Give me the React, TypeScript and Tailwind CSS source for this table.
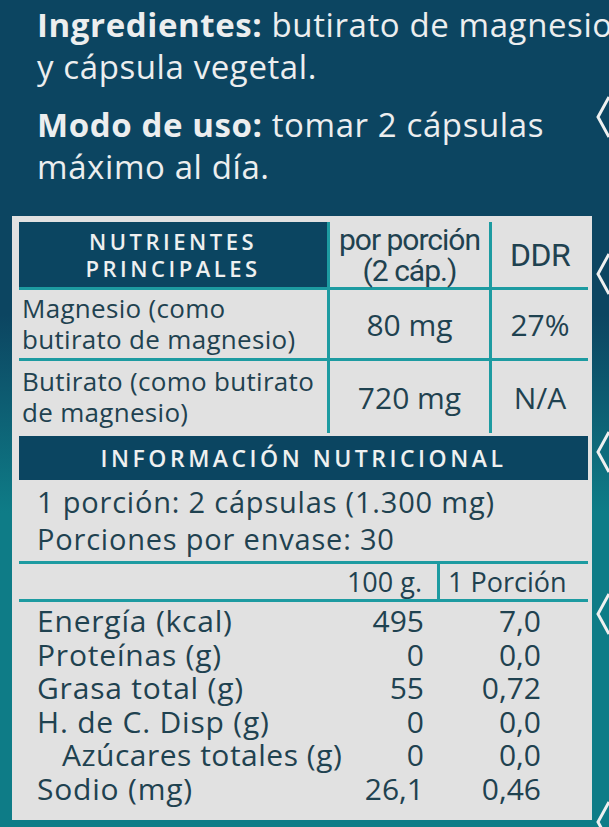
import React from "react";

const Chevron = ({ top }: { top: number }) => (
  <svg
    className="absolute right-0"
    style={{ top }}
    width="14"
    height="44"
    viewBox="0 0 14 44"
  >
    <polyline points="14,2 3,22 14,42" fill="none" stroke="#eef0f0" strokeWidth="3" />
  </svg>
);

const rows: [string, string, string, boolean][] = [
  ["Energía (kcal)", "495", "7,0", false],
  ["Proteínas (g)", "0", "0,0", false],
  ["Grasa total (g)", "55", "0,72", false],
  ["H. de C. Disp (g)", "0", "0,0", false],
  ["Azúcares totales (g)", "0", "0,0", true],
  ["Sodio (mg)", "26,1", "0,46", false],
];

export default function App() {
  return (
    <div className="relative w-[609px] h-[827px] overflow-hidden bg-linear-to-b from-[#0c4561] from-[38%] to-[#0e7c87] to-[62%] font-['Open_Sans',sans-serif]">
      {/* top text */}
      <div className="h-[216px] pl-[37px] pt-[4px] text-[33px] leading-[42px] tracking-[0.6px] text-[#eceeef]">
        <p className="whitespace-nowrap">
          <span className="font-bold">Ingredientes:</span> butirato de magnesio
        </p>
        <p>y cápsula vegetal.</p>
        <p className="mt-[16px] whitespace-nowrap">
          <span className="font-bold">Modo de uso:</span> tomar 2 cápsulas
        </p>
        <p>máximo al día.</p>
      </div>

      {/* panel */}
      <div className="ml-[12px] w-[580px] h-[604px] bg-[#e1e1e1] pl-[7px] pr-[4px] pt-[6px] text-[#1f4250]">
        {/* table 1 */}
        <div className="grid grid-cols-[308px_159px_96px] grid-rows-[65px_68px_72px] gap-[3px] bg-[#1d9ba1]">
          <div className="bg-[#0b4561] flex flex-col items-center justify-center text-[22px] leading-[27px] font-semibold tracking-[3.5px] text-[#eef0f0]">
            <span>NUTRIENTES</span>
            <span>PRINCIPALES</span>
          </div>
          <div className="bg-[#e1e1e1] flex flex-col items-center justify-center text-[30px] leading-[31px] tracking-[-1px] font-['Liberation_Sans_Narrow','Roboto',sans-serif]">
            <span>por porción</span>
            <span>(2 cáp.)</span>
          </div>
          <div className="bg-[#e1e1e1] flex items-center justify-center text-[32px] tracking-[-0.5px] font-['Liberation_Sans_Narrow','Roboto',sans-serif]">
            DDR
          </div>

          <div className="bg-[#e1e1e1] flex flex-col justify-center pl-[3px] text-[26px] leading-[31px] tracking-[0.3px]">
            <span>Magnesio (como</span>
            <span>butirato de magnesio)</span>
          </div>
          <div className="bg-[#e1e1e1] flex items-center justify-center text-[30px]">80 mg</div>
          <div className="bg-[#e1e1e1] flex items-center justify-center text-[30px]">27%</div>

          <div className="bg-[#e1e1e1] flex flex-col justify-center pl-[3px] text-[26px] leading-[31px] tracking-[0.3px]">
            <span>Butirato (como butirato</span>
            <span>de magnesio)</span>
          </div>
          <div className="bg-[#e1e1e1] flex items-center justify-center text-[30px]">720 mg</div>
          <div className="bg-[#e1e1e1] flex items-center justify-center text-[30px]">N/A</div>
        </div>

        {/* info header */}
        <div className="mt-[3px] h-[44px] bg-[#0b4561] flex items-center justify-center text-[23px] font-semibold tracking-[3.5px] text-[#eef0f0]">
          INFORMACIÓN NUTRICIONAL
        </div>

        <div className="pl-[18px] pt-[3px] text-[29px] leading-[37px] tracking-[0.8px]">
          <p className="whitespace-nowrap">1 porción: 2 cápsulas (1.300 mg)</p>
          <p className="whitespace-nowrap">Porciones por envase: 30</p>
        </div>

        <div className="mt-[4px] h-[3px] bg-[#1d9ba1]" />
        <div className="flex h-[35px] text-[27px] leading-[35px]">
          <div className="w-[404px] text-right pr-[1px] whitespace-nowrap">100 g.</div>
          <div className="ml-[14px] w-[3px] bg-[#1d9ba1]" />
          <div className="pl-[8px] whitespace-nowrap">1 Porción</div>
        </div>
        <div className="h-[3px] bg-[#1d9ba1]" />

        <div className="pt-[2px] text-[30px] leading-[33.5px]">
          {rows.map(([l, a, b, indent]) => (
            <div key={l} className="flex whitespace-nowrap">
              <div className={indent ? "w-[330px] pl-[43px] tracking-[0.5px]" : "w-[330px] pl-[18px] tracking-[0.8px]"}>{l}</div>
              <div className="w-[75px] text-right">{a}</div>
              <div className="w-[117px] text-right">{b}</div>
            </div>
          ))}
        </div>
      </div>

      <Chevron top={95} />
      <Chevron top={252} />
      <Chevron top={430} />
      <Chevron top={592} />
      <Chevron top={800} />
    </div>
  );
}
